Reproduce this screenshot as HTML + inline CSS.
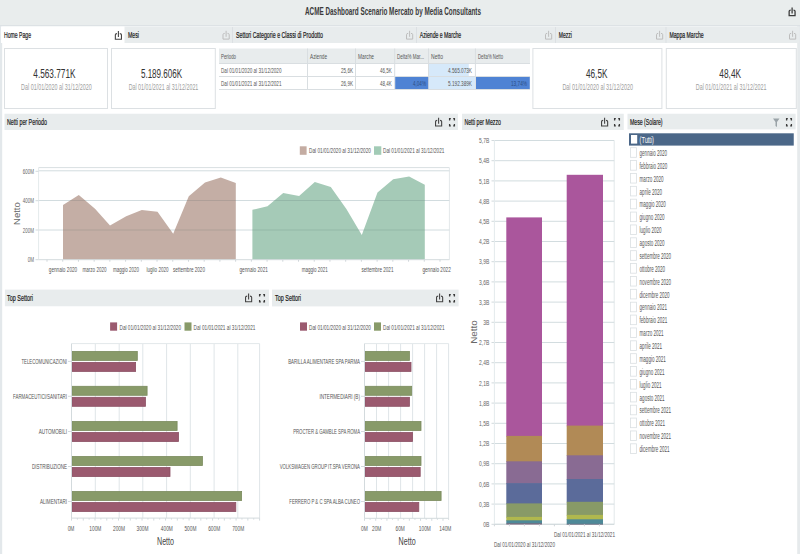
<!DOCTYPE html><html><head><meta charset="utf-8"><style>html,body{margin:0;padding:0;background:#e9eded;overflow:hidden}svg{display:block}text{font-family:"Liberation Sans", sans-serif}</style></head><body>
<svg width="800" height="554" viewBox="0 0 800 554">
<rect x="0" y="0" width="800" height="554" fill="#e9eded" />
<text x="305.0" y="15.0" font-size="10" fill="#3a3a3a" font-weight="bold" textLength="176.0" lengthAdjust="spacingAndGlyphs" >ACME Dashboard Scenario Mercato by Media Consultants</text>
<path d="M790.70 10.10 Q789.15 10.10 789.15 11.30 V15.65 H795.05 V11.30 Q795.05 10.10 793.50 10.10" fill="none" stroke="#3c3c3c" stroke-width="1.3"/>
<path d="M792.10 7.50 V13.50" fill="none" stroke="#3c3c3c" stroke-width="1.3"/>
<rect x="0" y="25" width="800" height="529" fill="#ffffff" />
<rect x="0" y="25" width="2.2" height="529" fill="#e3e8eb" />
<rect x="797.2" y="25" width="2.8" height="529" fill="#e6eaec" />
<line x1="0" y1="25.6" x2="800" y2="25.6" stroke="#dde2e5" stroke-width="1.2"/>
<rect x="1" y="26.5" width="798" height="16.5" fill="#e8eced" />
<rect x="1" y="26.5" width="123.5" height="16.5" fill="#ffffff" />
<line x1="232.5" y1="27" x2="232.5" y2="43" stroke="#dce0e3" stroke-width="1"/>
<line x1="416.5" y1="27" x2="416.5" y2="43" stroke="#dce0e3" stroke-width="1"/>
<line x1="555.5" y1="27" x2="555.5" y2="43" stroke="#dce0e3" stroke-width="1"/>
<line x1="666" y1="27" x2="666" y2="43" stroke="#dce0e3" stroke-width="1"/>
<text x="4.0" y="38.0" font-size="8.3" fill="#1a1a1a" font-weight="normal" textLength="27.0" lengthAdjust="spacingAndGlyphs"  stroke="#1a1a1a" stroke-width="0.2">Home Page</text>
<text x="128.0" y="37.5" font-size="8.3" fill="#1a1a1a" font-weight="normal" textLength="11.0" lengthAdjust="spacingAndGlyphs"  stroke="#1a1a1a" stroke-width="0.2">Mesi</text>
<text x="236.0" y="38.0" font-size="8.3" fill="#1a1a1a" font-weight="normal" textLength="87.0" lengthAdjust="spacingAndGlyphs"  stroke="#1a1a1a" stroke-width="0.2">Settori Categorie e Classi di Prodotto</text>
<text x="419.8" y="38.0" font-size="8.3" fill="#1a1a1a" font-weight="normal" textLength="41.4" lengthAdjust="spacingAndGlyphs"  stroke="#1a1a1a" stroke-width="0.2">Aziende e Marche</text>
<text x="558.8" y="37.5" font-size="8.3" fill="#1a1a1a" font-weight="normal" textLength="13.1" lengthAdjust="spacingAndGlyphs"  stroke="#1a1a1a" stroke-width="0.2">Mezzi</text>
<text x="669.4" y="38.0" font-size="8.3" fill="#1a1a1a" font-weight="normal" textLength="34.3" lengthAdjust="spacingAndGlyphs"  stroke="#1a1a1a" stroke-width="0.2">Mappa Marche</text>
<path d="M117.00 33.60 Q115.35 33.60 115.35 34.80 V39.25 H121.45 V34.80 Q121.45 33.60 119.80 33.60" fill="none" stroke="#444" stroke-width="1.1"/>
<path d="M118.40 31.00 V37.00" fill="none" stroke="#444" stroke-width="1.1"/>
<path d="M224.70 33.40 Q223.00 33.40 223.00 34.60 V39.10 H229.20 V34.60 Q229.20 33.40 227.50 33.40" fill="none" stroke="#bdbdbd" stroke-width="1"/>
<path d="M226.10 30.80 V36.80" fill="none" stroke="#bdbdbd" stroke-width="1"/>
<path d="M408.20 33.40 Q406.50 33.40 406.50 34.60 V39.10 H412.70 V34.60 Q412.70 33.40 411.00 33.40" fill="none" stroke="#bdbdbd" stroke-width="1"/>
<path d="M409.60 30.80 V36.80" fill="none" stroke="#bdbdbd" stroke-width="1"/>
<path d="M547.20 33.40 Q545.50 33.40 545.50 34.60 V39.10 H551.70 V34.60 Q551.70 33.40 550.00 33.40" fill="none" stroke="#bdbdbd" stroke-width="1"/>
<path d="M548.60 30.80 V36.80" fill="none" stroke="#bdbdbd" stroke-width="1"/>
<path d="M658.20 33.40 Q656.50 33.40 656.50 34.60 V39.10 H662.70 V34.60 Q662.70 33.40 661.00 33.40" fill="none" stroke="#bdbdbd" stroke-width="1"/>
<path d="M659.60 30.80 V36.80" fill="none" stroke="#bdbdbd" stroke-width="1"/>
<path d="M791.20 33.40 Q789.50 33.40 789.50 34.60 V39.10 H795.70 V34.60 Q795.70 33.40 794.00 33.40" fill="none" stroke="#bdbdbd" stroke-width="1"/>
<path d="M792.60 30.80 V36.80" fill="none" stroke="#bdbdbd" stroke-width="1"/>
<rect x="4.5" y="48.5" width="103" height="60" fill="#ffffff" stroke="#dce0e3" stroke-width="1" />
<text x="33.3" y="77.7" font-size="12.5" fill="#333" font-weight="normal" textLength="42.2" lengthAdjust="spacingAndGlyphs" >4.563.771K</text>
<text x="21.1" y="90.4" font-size="8.8" fill="#a0a0a0" font-weight="normal" textLength="70.6" lengthAdjust="spacingAndGlyphs" >Dal 01/01/2020 al 31/12/2020</text>
<rect x="111.5" y="48.5" width="103.80000000000001" height="60" fill="#ffffff" stroke="#dce0e3" stroke-width="1" />
<text x="140.9" y="77.7" font-size="12.5" fill="#333" font-weight="normal" textLength="41.3" lengthAdjust="spacingAndGlyphs" >5.189.606K</text>
<text x="128.7" y="90.4" font-size="8.8" fill="#a0a0a0" font-weight="normal" textLength="69.6" lengthAdjust="spacingAndGlyphs" >Dal 01/01/2021 al 31/12/2021</text>
<rect x="532.9" y="48.5" width="129.0" height="60" fill="#ffffff" stroke="#dce0e3" stroke-width="1" />
<text x="586.0" y="77.7" font-size="12.5" fill="#333" font-weight="normal" textLength="21.4" lengthAdjust="spacingAndGlyphs" >46,5K</text>
<text x="562.4" y="90.4" font-size="8.8" fill="#a0a0a0" font-weight="normal" textLength="70.6" lengthAdjust="spacingAndGlyphs" >Dal 01/01/2020 al 31/12/2020</text>
<rect x="666.3" y="48.5" width="130.0" height="60" fill="#ffffff" stroke="#dce0e3" stroke-width="1" />
<text x="719.3" y="77.7" font-size="12.5" fill="#333" font-weight="normal" textLength="21.8" lengthAdjust="spacingAndGlyphs" >48,4K</text>
<text x="695.8" y="90.4" font-size="8.8" fill="#a0a0a0" font-weight="normal" textLength="70.6" lengthAdjust="spacingAndGlyphs" >Dal 01/01/2021 al 31/12/2021</text>
<rect x="219" y="48.5" width="311" height="15" fill="#e8eced" />
<line x1="307.5" y1="48.5" x2="307.5" y2="89.5" stroke="#d9dee1" stroke-width="1"/>
<line x1="355.5" y1="48.5" x2="355.5" y2="89.5" stroke="#d9dee1" stroke-width="1"/>
<line x1="394.7" y1="48.5" x2="394.7" y2="89.5" stroke="#d9dee1" stroke-width="1"/>
<line x1="428.5" y1="48.5" x2="428.5" y2="89.5" stroke="#d9dee1" stroke-width="1"/>
<line x1="475.4" y1="48.5" x2="475.4" y2="89.5" stroke="#d9dee1" stroke-width="1"/>
<line x1="219" y1="63.5" x2="530" y2="63.5" stroke="#d9dee1" stroke-width="1"/>
<line x1="219" y1="76.5" x2="530" y2="76.5" stroke="#d9dee1" stroke-width="1"/>
<line x1="219" y1="89.5" x2="530" y2="89.5" stroke="#d9dee1" stroke-width="1"/>
<rect x="429" y="64" width="39.8" height="12" fill="#d6e9fa" />
<rect x="429" y="77" width="46" height="12" fill="#d6e9fa" />
<rect x="395.2" y="77" width="33" height="12" fill="#4f83d4" />
<rect x="476" y="77" width="53.8" height="12" fill="#4f83d4" />
<text x="221.0" y="58.5" font-size="8" fill="#555" font-weight="normal" textLength="15.0" lengthAdjust="spacingAndGlyphs" >Periodo</text>
<text x="310.0" y="58.5" font-size="8" fill="#555" font-weight="normal" textLength="17.0" lengthAdjust="spacingAndGlyphs" >Aziende</text>
<text x="358.0" y="58.5" font-size="8" fill="#555" font-weight="normal" textLength="16.0" lengthAdjust="spacingAndGlyphs" >Marche</text>
<text x="397.0" y="58.5" font-size="8" fill="#555" font-weight="normal" textLength="27.0" lengthAdjust="spacingAndGlyphs" >Delta% Mar...</text>
<text x="431.0" y="58.5" font-size="8" fill="#555" font-weight="normal" textLength="12.0" lengthAdjust="spacingAndGlyphs" >Netto</text>
<text x="478.0" y="58.5" font-size="8" fill="#555" font-weight="normal" textLength="25.0" lengthAdjust="spacingAndGlyphs" >Delta% Netto</text>
<text x="221.0" y="72.7" font-size="8" fill="#555" font-weight="normal" textLength="60.5" lengthAdjust="spacingAndGlyphs" >Dal 01/01/2020 al 31/12/2020</text>
<text x="221.0" y="85.7" font-size="8" fill="#555" font-weight="normal" textLength="60.5" lengthAdjust="spacingAndGlyphs" >Dal 01/01/2021 al 31/12/2021</text>
<text x="341.0" y="72.7" font-size="8" fill="#555" font-weight="normal" textLength="12.0" lengthAdjust="spacingAndGlyphs" >25,6K</text>
<text x="380.0" y="72.7" font-size="8" fill="#555" font-weight="normal" textLength="11.7" lengthAdjust="spacingAndGlyphs" >46,5K</text>
<text x="341.0" y="85.7" font-size="8" fill="#555" font-weight="normal" textLength="12.0" lengthAdjust="spacingAndGlyphs" >26,9K</text>
<text x="380.0" y="85.7" font-size="8" fill="#555" font-weight="normal" textLength="11.7" lengthAdjust="spacingAndGlyphs" >48,4K</text>
<text x="448.0" y="72.7" font-size="8" fill="#555" font-weight="normal" textLength="24.0" lengthAdjust="spacingAndGlyphs" >4.565.073K</text>
<text x="448.0" y="85.7" font-size="8" fill="#555" font-weight="normal" textLength="24.0" lengthAdjust="spacingAndGlyphs" >5.192.389K</text>
<text x="413.0" y="85.7" font-size="8" fill="#2d4f85" font-weight="normal" textLength="13.0" lengthAdjust="spacingAndGlyphs" >4,04%</text>
<text x="511.0" y="85.7" font-size="8" fill="#2d4f85" font-weight="normal" textLength="16.0" lengthAdjust="spacingAndGlyphs" >13,74%</text>
<rect x="4.5" y="113.75" width="453.5" height="16.25" fill="#e8eced" />
<text x="7.0" y="125.0" font-size="8.3" fill="#1a1a1a" font-weight="normal" textLength="40.0" lengthAdjust="spacingAndGlyphs"  stroke="#1a1a1a" stroke-width="0.2">Netti per Periodo</text>
<path d="M437.20 120.40 Q435.55 120.40 435.55 121.60 V126.05 H441.65 V121.60 Q441.65 120.40 440.00 120.40" fill="none" stroke="#444" stroke-width="1.1"/>
<path d="M438.60 117.80 V123.80" fill="none" stroke="#444" stroke-width="1.1"/>
<path d="M449.6 120.6 V118.6 H450.8 M453.2 118.6 H454.4 V120.6 M449.6 123.9 V125.9 H450.8 M453.2 125.9 H454.4 V123.9" fill="none" stroke="#3a3a3a" stroke-width="1.3"/>
<rect x="299.8" y="146.3" width="6.8" height="8.5" fill="#c4aca2" />
<text x="309.0" y="153.3" font-size="8" fill="#555" font-weight="normal" textLength="62.0" lengthAdjust="spacingAndGlyphs" >Dal 01/01/2020 al 31/12/2020</text>
<rect x="374" y="146.3" width="7.3" height="8.5" fill="#a2cbb6" />
<text x="383.0" y="153.3" font-size="8" fill="#555" font-weight="normal" textLength="61.4" lengthAdjust="spacingAndGlyphs" >Dal 01/01/2021 al 31/12/2021</text>
<rect x="38.6" y="167.6" width="410.79999999999995" height="92.1" fill="#ffffff" />
<line x1="38.6" y1="167.6" x2="449.4" y2="167.6" stroke="#d9dfe2" stroke-width="1"/>
<line x1="449.4" y1="167.6" x2="449.4" y2="259.7" stroke="#e3e8ea" stroke-width="1"/>
<line x1="38.6" y1="170.8" x2="449.4" y2="170.8" stroke="#d2dcdf" stroke-width="1"/>
<line x1="38.6" y1="200.5" x2="449.4" y2="200.5" stroke="#d2dcdf" stroke-width="1"/>
<line x1="38.6" y1="230.0" x2="449.4" y2="230.0" stroke="#d2dcdf" stroke-width="1"/>
<path d="M63.0 259.7 L63.0 205.0 L78.8 195.0 L95.0 208.8 L110.0 225.5 L126.2 216.2 L141.8 210.0 L157.5 211.8 L173.2 233.8 L188.8 196.2 L205.0 182.5 L220.8 177.5 L235.8 183.0 L235.8 259.7 Z" fill="#c4aea5"/>
<path d="M252.4 259.7 L252.4 209.8 L267.5 206.2 L283.2 193.0 L299.1 196.1 L314.8 182.0 L330.8 187.0 L346.4 209.0 L361.8 235.1 L377.5 192.5 L393.2 179.3 L409.1 176.6 L424.8 184.8 L424.8 259.7 Z" fill="#a5cab7"/>
<clipPath id="ac"><path d="M63.0 259.7 L63.0 205.0 L78.8 195.0 L95.0 208.8 L110.0 225.5 L126.2 216.2 L141.8 210.0 L157.5 211.8 L173.2 233.8 L188.8 196.2 L205.0 182.5 L220.8 177.5 L235.8 183.0 L235.8 259.7 Z M252.4 259.7 L252.4 209.8 L267.5 206.2 L283.2 193.0 L299.1 196.1 L314.8 182.0 L330.8 187.0 L346.4 209.0 L361.8 235.1 L377.5 192.5 L393.2 179.3 L409.1 176.6 L424.8 184.8 L424.8 259.7 Z"/></clipPath>
<g clip-path="url(#ac)">
<line x1="38.6" y1="200.5" x2="449.4" y2="200.5" stroke="rgba(40,60,70,0.13)" stroke-width="1.1"/>
<line x1="38.6" y1="230.0" x2="449.4" y2="230.0" stroke="rgba(40,60,70,0.13)" stroke-width="1.1"/>
</g>
<line x1="38.6" y1="259.7" x2="449.4" y2="259.7" stroke="#d3dadd" stroke-width="1"/>
<line x1="38.6" y1="167.6" x2="38.6" y2="259.7" stroke="#e4eaec" stroke-width="1"/>
<text x="22.8" y="174.0" font-size="7.3" fill="#666" font-weight="normal" textLength="11.2" lengthAdjust="spacingAndGlyphs" >600M</text>
<line x1="35.5" y1="171.3" x2="38.6" y2="171.3" stroke="#d3dadd" stroke-width="1"/>
<text x="22.8" y="203.4" font-size="7.3" fill="#666" font-weight="normal" textLength="11.2" lengthAdjust="spacingAndGlyphs" >400M</text>
<line x1="35.5" y1="200.7" x2="38.6" y2="200.7" stroke="#d3dadd" stroke-width="1"/>
<text x="22.8" y="232.7" font-size="7.3" fill="#666" font-weight="normal" textLength="11.2" lengthAdjust="spacingAndGlyphs" >200M</text>
<line x1="35.5" y1="230" x2="38.6" y2="230" stroke="#d3dadd" stroke-width="1"/>
<text x="27.7" y="262.4" font-size="7.3" fill="#666" font-weight="normal" textLength="6.3" lengthAdjust="spacingAndGlyphs" >0M</text>
<line x1="35.5" y1="259.7" x2="38.6" y2="259.7" stroke="#d3dadd" stroke-width="1"/>
<line x1="47.0" y1="259.7" x2="47.0" y2="261.7" stroke="#d0d6da" stroke-width="1"/>
<line x1="62.72" y1="259.7" x2="62.72" y2="261.7" stroke="#d0d6da" stroke-width="1"/>
<line x1="78.44" y1="259.7" x2="78.44" y2="261.7" stroke="#d0d6da" stroke-width="1"/>
<line x1="94.16" y1="259.7" x2="94.16" y2="261.7" stroke="#d0d6da" stroke-width="1"/>
<line x1="109.88" y1="259.7" x2="109.88" y2="261.7" stroke="#d0d6da" stroke-width="1"/>
<line x1="125.60000000000001" y1="259.7" x2="125.60000000000001" y2="261.7" stroke="#d0d6da" stroke-width="1"/>
<line x1="141.32" y1="259.7" x2="141.32" y2="261.7" stroke="#d0d6da" stroke-width="1"/>
<line x1="157.04000000000002" y1="259.7" x2="157.04000000000002" y2="261.7" stroke="#d0d6da" stroke-width="1"/>
<line x1="172.76" y1="259.7" x2="172.76" y2="261.7" stroke="#d0d6da" stroke-width="1"/>
<line x1="188.48000000000002" y1="259.7" x2="188.48000000000002" y2="261.7" stroke="#d0d6da" stroke-width="1"/>
<line x1="204.20000000000002" y1="259.7" x2="204.20000000000002" y2="261.7" stroke="#d0d6da" stroke-width="1"/>
<line x1="219.92000000000002" y1="259.7" x2="219.92000000000002" y2="261.7" stroke="#d0d6da" stroke-width="1"/>
<line x1="235.64000000000001" y1="259.7" x2="235.64000000000001" y2="261.7" stroke="#d0d6da" stroke-width="1"/>
<line x1="251.36" y1="259.7" x2="251.36" y2="261.7" stroke="#d0d6da" stroke-width="1"/>
<line x1="267.08000000000004" y1="259.7" x2="267.08000000000004" y2="261.7" stroke="#d0d6da" stroke-width="1"/>
<line x1="282.8" y1="259.7" x2="282.8" y2="261.7" stroke="#d0d6da" stroke-width="1"/>
<line x1="298.52" y1="259.7" x2="298.52" y2="261.7" stroke="#d0d6da" stroke-width="1"/>
<line x1="314.24" y1="259.7" x2="314.24" y2="261.7" stroke="#d0d6da" stroke-width="1"/>
<line x1="329.96000000000004" y1="259.7" x2="329.96000000000004" y2="261.7" stroke="#d0d6da" stroke-width="1"/>
<line x1="345.68" y1="259.7" x2="345.68" y2="261.7" stroke="#d0d6da" stroke-width="1"/>
<line x1="361.40000000000003" y1="259.7" x2="361.40000000000003" y2="261.7" stroke="#d0d6da" stroke-width="1"/>
<line x1="377.12" y1="259.7" x2="377.12" y2="261.7" stroke="#d0d6da" stroke-width="1"/>
<line x1="392.84000000000003" y1="259.7" x2="392.84000000000003" y2="261.7" stroke="#d0d6da" stroke-width="1"/>
<line x1="408.56" y1="259.7" x2="408.56" y2="261.7" stroke="#d0d6da" stroke-width="1"/>
<line x1="424.28000000000003" y1="259.7" x2="424.28000000000003" y2="261.7" stroke="#d0d6da" stroke-width="1"/>
<line x1="440.0" y1="259.7" x2="440.0" y2="261.7" stroke="#d0d6da" stroke-width="1"/>
<text x="0" y="0" font-size="9" fill="#686868" textLength="22.8" lengthAdjust="spacingAndGlyphs" transform="translate(20.3,213.6) rotate(-90)" text-anchor="middle">Netto</text>
<text x="48.8" y="272.3" font-size="7.6" fill="#555" font-weight="normal" textLength="28.4" lengthAdjust="spacingAndGlyphs" >gennaio 2020</text>
<text x="82.5" y="272.3" font-size="7.6" fill="#555" font-weight="normal" textLength="24.0" lengthAdjust="spacingAndGlyphs" >marzo 2020</text>
<text x="113.0" y="272.3" font-size="7.6" fill="#555" font-weight="normal" textLength="26.0" lengthAdjust="spacingAndGlyphs" >maggio 2020</text>
<text x="146.5" y="272.3" font-size="7.6" fill="#555" font-weight="normal" textLength="22.0" lengthAdjust="spacingAndGlyphs" >luglio 2020</text>
<text x="173.0" y="272.3" font-size="7.6" fill="#555" font-weight="normal" textLength="32.0" lengthAdjust="spacingAndGlyphs" >settembre 2020</text>
<text x="239.5" y="272.3" font-size="7.6" fill="#555" font-weight="normal" textLength="28.4" lengthAdjust="spacingAndGlyphs" >gennaio 2021</text>
<text x="301.8" y="272.3" font-size="7.6" fill="#555" font-weight="normal" textLength="26.0" lengthAdjust="spacingAndGlyphs" >maggio 2021</text>
<text x="361.5" y="272.3" font-size="7.6" fill="#555" font-weight="normal" textLength="32.0" lengthAdjust="spacingAndGlyphs" >settembre 2021</text>
<text x="422.4" y="272.3" font-size="7.6" fill="#555" font-weight="normal" textLength="28.4" lengthAdjust="spacingAndGlyphs" >gennaio 2022</text>
<rect x="462" y="113.75" width="161.75" height="16.25" fill="#e8eced" />
<text x="464.4" y="125.0" font-size="8.3" fill="#1a1a1a" font-weight="normal" textLength="36.5" lengthAdjust="spacingAndGlyphs"  stroke="#1a1a1a" stroke-width="0.2">Netti per Mezzo</text>
<path d="M603.20 120.40 Q601.55 120.40 601.55 121.60 V126.05 H607.65 V121.60 Q607.65 120.40 606.00 120.40" fill="none" stroke="#444" stroke-width="1.1"/>
<path d="M604.60 117.80 V123.80" fill="none" stroke="#444" stroke-width="1.1"/>
<path d="M614.6 120.6 V118.6 H615.8 M618.2 118.6 H619.4 V120.6 M614.6 123.9 V125.9 H615.8 M618.2 125.9 H619.4 V123.9" fill="none" stroke="#3a3a3a" stroke-width="1.3"/>
<line x1="614.2" y1="140.5" x2="614.2" y2="524.3" stroke="#e3e8ea" stroke-width="1"/>
<line x1="494.4" y1="140.5" x2="614.2" y2="140.5" stroke="#d2dcdf" stroke-width="1"/>
<line x1="491.5" y1="140.5" x2="494.4" y2="140.5" stroke="#d3dadd" stroke-width="1"/>
<text x="479.1" y="143.1" font-size="7.6" fill="#666" font-weight="normal" textLength="10.2" lengthAdjust="spacingAndGlyphs" >5,7B</text>
<line x1="494.4" y1="160.7" x2="614.2" y2="160.7" stroke="#d2dcdf" stroke-width="1"/>
<line x1="491.5" y1="160.7" x2="494.4" y2="160.7" stroke="#d3dadd" stroke-width="1"/>
<text x="479.1" y="163.3" font-size="7.6" fill="#666" font-weight="normal" textLength="10.2" lengthAdjust="spacingAndGlyphs" >5,4B</text>
<line x1="494.4" y1="180.9" x2="614.2" y2="180.9" stroke="#d2dcdf" stroke-width="1"/>
<line x1="491.5" y1="180.9" x2="494.4" y2="180.9" stroke="#d3dadd" stroke-width="1"/>
<text x="479.1" y="183.5" font-size="7.6" fill="#666" font-weight="normal" textLength="10.2" lengthAdjust="spacingAndGlyphs" >5,1B</text>
<line x1="494.4" y1="201.1" x2="614.2" y2="201.1" stroke="#d2dcdf" stroke-width="1"/>
<line x1="491.5" y1="201.1" x2="494.4" y2="201.1" stroke="#d3dadd" stroke-width="1"/>
<text x="479.1" y="203.7" font-size="7.6" fill="#666" font-weight="normal" textLength="10.2" lengthAdjust="spacingAndGlyphs" >4,8B</text>
<line x1="494.4" y1="221.3" x2="614.2" y2="221.3" stroke="#d2dcdf" stroke-width="1"/>
<line x1="491.5" y1="221.3" x2="494.4" y2="221.3" stroke="#d3dadd" stroke-width="1"/>
<text x="479.1" y="223.9" font-size="7.6" fill="#666" font-weight="normal" textLength="10.2" lengthAdjust="spacingAndGlyphs" >4,5B</text>
<line x1="494.4" y1="241.5" x2="614.2" y2="241.5" stroke="#d2dcdf" stroke-width="1"/>
<line x1="491.5" y1="241.5" x2="494.4" y2="241.5" stroke="#d3dadd" stroke-width="1"/>
<text x="479.1" y="244.1" font-size="7.6" fill="#666" font-weight="normal" textLength="10.2" lengthAdjust="spacingAndGlyphs" >4,2B</text>
<line x1="494.4" y1="261.7" x2="614.2" y2="261.7" stroke="#d2dcdf" stroke-width="1"/>
<line x1="491.5" y1="261.7" x2="494.4" y2="261.7" stroke="#d3dadd" stroke-width="1"/>
<text x="479.1" y="264.3" font-size="7.6" fill="#666" font-weight="normal" textLength="10.2" lengthAdjust="spacingAndGlyphs" >3,9B</text>
<line x1="494.4" y1="281.9" x2="614.2" y2="281.9" stroke="#d2dcdf" stroke-width="1"/>
<line x1="491.5" y1="281.9" x2="494.4" y2="281.9" stroke="#d3dadd" stroke-width="1"/>
<text x="479.1" y="284.5" font-size="7.6" fill="#666" font-weight="normal" textLength="10.2" lengthAdjust="spacingAndGlyphs" >3,6B</text>
<line x1="494.4" y1="302.1" x2="614.2" y2="302.1" stroke="#d2dcdf" stroke-width="1"/>
<line x1="491.5" y1="302.1" x2="494.4" y2="302.1" stroke="#d3dadd" stroke-width="1"/>
<text x="479.1" y="304.7" font-size="7.6" fill="#666" font-weight="normal" textLength="10.2" lengthAdjust="spacingAndGlyphs" >3,3B</text>
<line x1="494.4" y1="322.29999999999995" x2="614.2" y2="322.29999999999995" stroke="#d2dcdf" stroke-width="1"/>
<line x1="491.5" y1="322.29999999999995" x2="494.4" y2="322.29999999999995" stroke="#d3dadd" stroke-width="1"/>
<text x="483.2" y="324.9" font-size="7.6" fill="#666" font-weight="normal" textLength="6.1" lengthAdjust="spacingAndGlyphs" >3B</text>
<line x1="494.4" y1="342.5" x2="614.2" y2="342.5" stroke="#d2dcdf" stroke-width="1"/>
<line x1="491.5" y1="342.5" x2="494.4" y2="342.5" stroke="#d3dadd" stroke-width="1"/>
<text x="479.1" y="345.1" font-size="7.6" fill="#666" font-weight="normal" textLength="10.2" lengthAdjust="spacingAndGlyphs" >2,7B</text>
<line x1="494.4" y1="362.7" x2="614.2" y2="362.7" stroke="#d2dcdf" stroke-width="1"/>
<line x1="491.5" y1="362.7" x2="494.4" y2="362.7" stroke="#d3dadd" stroke-width="1"/>
<text x="479.1" y="365.3" font-size="7.6" fill="#666" font-weight="normal" textLength="10.2" lengthAdjust="spacingAndGlyphs" >2,4B</text>
<line x1="494.4" y1="382.9" x2="614.2" y2="382.9" stroke="#d2dcdf" stroke-width="1"/>
<line x1="491.5" y1="382.9" x2="494.4" y2="382.9" stroke="#d3dadd" stroke-width="1"/>
<text x="479.1" y="385.5" font-size="7.6" fill="#666" font-weight="normal" textLength="10.2" lengthAdjust="spacingAndGlyphs" >2,1B</text>
<line x1="494.4" y1="403.09999999999997" x2="614.2" y2="403.09999999999997" stroke="#d2dcdf" stroke-width="1"/>
<line x1="491.5" y1="403.09999999999997" x2="494.4" y2="403.09999999999997" stroke="#d3dadd" stroke-width="1"/>
<text x="479.1" y="405.7" font-size="7.6" fill="#666" font-weight="normal" textLength="10.2" lengthAdjust="spacingAndGlyphs" >1,8B</text>
<line x1="494.4" y1="423.3" x2="614.2" y2="423.3" stroke="#d2dcdf" stroke-width="1"/>
<line x1="491.5" y1="423.3" x2="494.4" y2="423.3" stroke="#d3dadd" stroke-width="1"/>
<text x="479.1" y="425.9" font-size="7.6" fill="#666" font-weight="normal" textLength="10.2" lengthAdjust="spacingAndGlyphs" >1,5B</text>
<line x1="494.4" y1="443.5" x2="614.2" y2="443.5" stroke="#d2dcdf" stroke-width="1"/>
<line x1="491.5" y1="443.5" x2="494.4" y2="443.5" stroke="#d3dadd" stroke-width="1"/>
<text x="479.1" y="446.1" font-size="7.6" fill="#666" font-weight="normal" textLength="10.2" lengthAdjust="spacingAndGlyphs" >1,2B</text>
<line x1="494.4" y1="463.7" x2="614.2" y2="463.7" stroke="#d2dcdf" stroke-width="1"/>
<line x1="491.5" y1="463.7" x2="494.4" y2="463.7" stroke="#d3dadd" stroke-width="1"/>
<text x="479.1" y="466.3" font-size="7.6" fill="#666" font-weight="normal" textLength="10.2" lengthAdjust="spacingAndGlyphs" >0,9B</text>
<line x1="494.4" y1="483.9" x2="614.2" y2="483.9" stroke="#d2dcdf" stroke-width="1"/>
<line x1="491.5" y1="483.9" x2="494.4" y2="483.9" stroke="#d3dadd" stroke-width="1"/>
<text x="479.1" y="486.5" font-size="7.6" fill="#666" font-weight="normal" textLength="10.2" lengthAdjust="spacingAndGlyphs" >0,6B</text>
<line x1="494.4" y1="504.09999999999997" x2="614.2" y2="504.09999999999997" stroke="#d2dcdf" stroke-width="1"/>
<line x1="491.5" y1="504.09999999999997" x2="494.4" y2="504.09999999999997" stroke="#d3dadd" stroke-width="1"/>
<text x="479.1" y="506.7" font-size="7.6" fill="#666" font-weight="normal" textLength="10.2" lengthAdjust="spacingAndGlyphs" >0,3B</text>
<line x1="494.4" y1="524.3" x2="614.2" y2="524.3" stroke="#d2dcdf" stroke-width="1"/>
<line x1="491.5" y1="524.3" x2="494.4" y2="524.3" stroke="#d3dadd" stroke-width="1"/>
<text x="483.2" y="526.9" font-size="7.6" fill="#666" font-weight="normal" textLength="6.1" lengthAdjust="spacingAndGlyphs" >0B</text>
<line x1="494.4" y1="140.5" x2="494.4" y2="524.3" stroke="#e4eaec" stroke-width="1"/>
<line x1="494.4" y1="524.3" x2="614.2" y2="524.3" stroke="#d3dadd" stroke-width="1"/>
<rect x="506.3" y="217.4" width="35.69999999999999" height="219.19999999999996" fill="#aa569c" />
<rect x="506.3" y="435.9" width="35.69999999999999" height="26.100000000000033" fill="#b18a56" />
<rect x="506.3" y="461.3" width="35.69999999999999" height="22.50000000000001" fill="#896b93" />
<rect x="506.3" y="483.1" width="35.69999999999999" height="20.999999999999954" fill="#5b6b9a" />
<rect x="506.3" y="503.4" width="35.69999999999999" height="14.2" fill="#889a67" />
<rect x="506.3" y="516.9" width="35.69999999999999" height="4.099999999999977" fill="#b0b84e" />
<rect x="506.3" y="520.3" width="35.69999999999999" height="4.000000000000068" fill="#4e8998" />
<rect x="506.3" y="523.6" width="35.69999999999999" height="0.6999999999999318" fill="#a0526a" />
<rect x="566.7" y="174.8" width="36.299999999999955" height="251.5" fill="#aa569c" />
<rect x="566.7" y="425.6" width="36.299999999999955" height="30.399999999999988" fill="#b18a56" />
<rect x="566.7" y="455.3" width="36.299999999999955" height="24.399999999999988" fill="#896b93" />
<rect x="566.7" y="479.0" width="36.299999999999955" height="23.50000000000001" fill="#5b6b9a" />
<rect x="566.7" y="501.8" width="36.299999999999955" height="13.799999999999965" fill="#889a67" />
<rect x="566.7" y="514.9" width="36.299999999999955" height="5.099999999999977" fill="#b0b84e" />
<rect x="566.7" y="519.3" width="36.299999999999955" height="5.300000000000023" fill="#4e8998" />
<rect x="566.7" y="523.9" width="36.299999999999955" height="0.39999999999997726" fill="#a0526a" />
<line x1="494.4" y1="524.3" x2="494.4" y2="526.3" stroke="#d0d6da" stroke-width="1"/>
<line x1="509.4" y1="524.3" x2="509.4" y2="526.3" stroke="#d0d6da" stroke-width="1"/>
<line x1="524.4" y1="524.3" x2="524.4" y2="526.3" stroke="#d0d6da" stroke-width="1"/>
<line x1="539.4" y1="524.3" x2="539.4" y2="526.3" stroke="#d0d6da" stroke-width="1"/>
<line x1="554.4" y1="524.3" x2="554.4" y2="526.3" stroke="#d0d6da" stroke-width="1"/>
<line x1="569.4" y1="524.3" x2="569.4" y2="526.3" stroke="#d0d6da" stroke-width="1"/>
<line x1="584.4" y1="524.3" x2="584.4" y2="526.3" stroke="#d0d6da" stroke-width="1"/>
<line x1="599.4" y1="524.3" x2="599.4" y2="526.3" stroke="#d0d6da" stroke-width="1"/>
<text x="0" y="0" font-size="9" fill="#686868" textLength="23.7" lengthAdjust="spacingAndGlyphs" transform="translate(476.8,332) rotate(-90)" text-anchor="middle">Netto</text>
<text x="554.0" y="537.0" font-size="7.6" fill="#555" font-weight="normal" textLength="61.0" lengthAdjust="spacingAndGlyphs" >Dal 01/01/2021 al 31/12/2021</text>
<text x="494.0" y="546.5" font-size="7.6" fill="#555" font-weight="normal" textLength="61.0" lengthAdjust="spacingAndGlyphs" >Dal 01/01/2020 al 31/12/2020</text>
<rect x="627.5" y="113.75" width="168.10000000000002" height="15.650000000000006" fill="#e8eced" />
<text x="630.0" y="125.0" font-size="8.3" fill="#1a1a1a" font-weight="normal" textLength="32.5" lengthAdjust="spacingAndGlyphs"  stroke="#1a1a1a" stroke-width="0.2">Mese (Solare)</text>
<path d="M773 118.5 H779.5 L777 122 V127 L775.5 126 V122 Z" fill="#9aa3a8"/>
<path d="M786.6 120.6 V118.6 H787.8 M790.2 118.6 H791.4 V120.6 M786.6 123.9 V125.9 H787.8 M790.2 125.9 H791.4 V123.9" fill="none" stroke="#3a3a3a" stroke-width="1.3"/>
<rect x="629" y="133.3" width="164.75" height="12.3" fill="#4b6788" />
<rect x="631" y="135" width="6.2" height="8.6" fill="#ffffff" />
<text x="639.6" y="143.2" font-size="8.5" fill="#ffffff" font-weight="normal" textLength="14.4" lengthAdjust="spacingAndGlyphs" >(Tutti)</text>
<rect x="630.4" y="147.7" width="6.1" height="9.6" fill="#ffffff" stroke="#dadfe2" stroke-width="0.8" />
<text x="639.6" y="155.9" font-size="8.5" fill="#555" font-weight="normal" textLength="27.4" lengthAdjust="spacingAndGlyphs" >gennaio 2020</text>
<rect x="630.4" y="160.575" width="6.1" height="9.6" fill="#ffffff" stroke="#dadfe2" stroke-width="0.8" />
<text x="639.6" y="168.8" font-size="8.5" fill="#555" font-weight="normal" textLength="27.7" lengthAdjust="spacingAndGlyphs" >febbraio 2020</text>
<rect x="630.4" y="173.45" width="6.1" height="9.6" fill="#ffffff" stroke="#dadfe2" stroke-width="0.8" />
<text x="639.6" y="181.7" font-size="8.5" fill="#555" font-weight="normal" textLength="23.9" lengthAdjust="spacingAndGlyphs" >marzo 2020</text>
<rect x="630.4" y="186.325" width="6.1" height="9.6" fill="#ffffff" stroke="#dadfe2" stroke-width="0.8" />
<text x="639.6" y="194.5" font-size="8.5" fill="#555" font-weight="normal" textLength="22.4" lengthAdjust="spacingAndGlyphs" >aprile 2020</text>
<rect x="630.4" y="199.2" width="6.1" height="9.6" fill="#ffffff" stroke="#dadfe2" stroke-width="0.8" />
<text x="639.6" y="207.4" font-size="8.5" fill="#555" font-weight="normal" textLength="26.1" lengthAdjust="spacingAndGlyphs" >maggio 2020</text>
<rect x="630.4" y="212.075" width="6.1" height="9.6" fill="#ffffff" stroke="#dadfe2" stroke-width="0.8" />
<text x="639.6" y="220.3" font-size="8.5" fill="#555" font-weight="normal" textLength="24.9" lengthAdjust="spacingAndGlyphs" >giugno 2020</text>
<rect x="630.4" y="224.95" width="6.1" height="9.6" fill="#ffffff" stroke="#dadfe2" stroke-width="0.8" />
<text x="639.6" y="233.2" font-size="8.5" fill="#555" font-weight="normal" textLength="21.9" lengthAdjust="spacingAndGlyphs" >luglio 2020</text>
<rect x="630.4" y="237.825" width="6.1" height="9.6" fill="#ffffff" stroke="#dadfe2" stroke-width="0.8" />
<text x="639.6" y="246.0" font-size="8.5" fill="#555" font-weight="normal" textLength="24.9" lengthAdjust="spacingAndGlyphs" >agosto 2020</text>
<rect x="630.4" y="250.7" width="6.1" height="9.6" fill="#ffffff" stroke="#dadfe2" stroke-width="0.8" />
<text x="639.6" y="258.9" font-size="8.5" fill="#555" font-weight="normal" textLength="31.4" lengthAdjust="spacingAndGlyphs" >settembre 2020</text>
<rect x="630.4" y="263.575" width="6.1" height="9.6" fill="#ffffff" stroke="#dadfe2" stroke-width="0.8" />
<text x="639.6" y="271.8" font-size="8.5" fill="#555" font-weight="normal" textLength="25.4" lengthAdjust="spacingAndGlyphs" >ottobre 2020</text>
<rect x="630.4" y="276.45" width="6.1" height="9.6" fill="#ffffff" stroke="#dadfe2" stroke-width="0.8" />
<text x="639.6" y="284.6" font-size="8.5" fill="#555" font-weight="normal" textLength="31.4" lengthAdjust="spacingAndGlyphs" >novembre 2020</text>
<rect x="630.4" y="289.325" width="6.1" height="9.6" fill="#ffffff" stroke="#dadfe2" stroke-width="0.8" />
<text x="639.6" y="297.5" font-size="8.5" fill="#555" font-weight="normal" textLength="29.9" lengthAdjust="spacingAndGlyphs" >dicembre 2020</text>
<rect x="630.4" y="302.2" width="6.1" height="9.6" fill="#ffffff" stroke="#dadfe2" stroke-width="0.8" />
<text x="639.6" y="310.4" font-size="8.5" fill="#555" font-weight="normal" textLength="27.4" lengthAdjust="spacingAndGlyphs" >gennaio 2021</text>
<rect x="630.4" y="315.075" width="6.1" height="9.6" fill="#ffffff" stroke="#dadfe2" stroke-width="0.8" />
<text x="639.6" y="323.3" font-size="8.5" fill="#555" font-weight="normal" textLength="27.7" lengthAdjust="spacingAndGlyphs" >febbraio 2021</text>
<rect x="630.4" y="327.95" width="6.1" height="9.6" fill="#ffffff" stroke="#dadfe2" stroke-width="0.8" />
<text x="639.6" y="336.1" font-size="8.5" fill="#555" font-weight="normal" textLength="23.9" lengthAdjust="spacingAndGlyphs" >marzo 2021</text>
<rect x="630.4" y="340.825" width="6.1" height="9.6" fill="#ffffff" stroke="#dadfe2" stroke-width="0.8" />
<text x="639.6" y="349.0" font-size="8.5" fill="#555" font-weight="normal" textLength="22.4" lengthAdjust="spacingAndGlyphs" >aprile 2021</text>
<rect x="630.4" y="353.7" width="6.1" height="9.6" fill="#ffffff" stroke="#dadfe2" stroke-width="0.8" />
<text x="639.6" y="361.9" font-size="8.5" fill="#555" font-weight="normal" textLength="26.1" lengthAdjust="spacingAndGlyphs" >maggio 2021</text>
<rect x="630.4" y="366.575" width="6.1" height="9.6" fill="#ffffff" stroke="#dadfe2" stroke-width="0.8" />
<text x="639.6" y="374.8" font-size="8.5" fill="#555" font-weight="normal" textLength="24.9" lengthAdjust="spacingAndGlyphs" >giugno 2021</text>
<rect x="630.4" y="379.45" width="6.1" height="9.6" fill="#ffffff" stroke="#dadfe2" stroke-width="0.8" />
<text x="639.6" y="387.6" font-size="8.5" fill="#555" font-weight="normal" textLength="21.9" lengthAdjust="spacingAndGlyphs" >luglio 2021</text>
<rect x="630.4" y="392.325" width="6.1" height="9.6" fill="#ffffff" stroke="#dadfe2" stroke-width="0.8" />
<text x="639.6" y="400.5" font-size="8.5" fill="#555" font-weight="normal" textLength="24.9" lengthAdjust="spacingAndGlyphs" >agosto 2021</text>
<rect x="630.4" y="405.2" width="6.1" height="9.6" fill="#ffffff" stroke="#dadfe2" stroke-width="0.8" />
<text x="639.6" y="413.4" font-size="8.5" fill="#555" font-weight="normal" textLength="31.4" lengthAdjust="spacingAndGlyphs" >settembre 2021</text>
<rect x="630.4" y="418.075" width="6.1" height="9.6" fill="#ffffff" stroke="#dadfe2" stroke-width="0.8" />
<text x="639.6" y="426.3" font-size="8.5" fill="#555" font-weight="normal" textLength="25.4" lengthAdjust="spacingAndGlyphs" >ottobre 2021</text>
<rect x="630.4" y="430.95" width="6.1" height="9.6" fill="#ffffff" stroke="#dadfe2" stroke-width="0.8" />
<text x="639.6" y="439.1" font-size="8.5" fill="#555" font-weight="normal" textLength="31.4" lengthAdjust="spacingAndGlyphs" >novembre 2021</text>
<rect x="630.4" y="443.825" width="6.1" height="9.6" fill="#ffffff" stroke="#dadfe2" stroke-width="0.8" />
<text x="639.6" y="452.0" font-size="8.5" fill="#555" font-weight="normal" textLength="29.9" lengthAdjust="spacingAndGlyphs" >dicembre 2021</text>
<rect x="4.9" y="289.6" width="264.1" height="16.649999999999977" fill="#e8eced" />
<text x="7.1" y="300.8" font-size="8.3" fill="#1a1a1a" font-weight="normal" textLength="25.9" lengthAdjust="spacingAndGlyphs"  stroke="#1a1a1a" stroke-width="0.2">Top Settori</text>
<path d="M247.20 296.10 Q245.55 296.10 245.55 297.30 V301.75 H251.65 V297.30 Q251.65 296.10 250.00 296.10" fill="none" stroke="#444" stroke-width="1.1"/>
<path d="M248.60 293.50 V299.50" fill="none" stroke="#444" stroke-width="1.1"/>
<path d="M259.6 296.6 V294.6 H260.8 M263.2 294.6 H264.4 V296.6 M259.6 299.9 V301.9 H260.8 M263.2 301.9 H264.4 V299.9" fill="none" stroke="#3a3a3a" stroke-width="1.3"/>
<rect x="272" y="289.6" width="186.60000000000002" height="16.799999999999955" fill="#e8eced" />
<text x="275.0" y="300.8" font-size="8.3" fill="#1a1a1a" font-weight="normal" textLength="26.0" lengthAdjust="spacingAndGlyphs"  stroke="#1a1a1a" stroke-width="0.2">Top Settori</text>
<path d="M438.20 296.10 Q436.55 296.10 436.55 297.30 V301.75 H442.65 V297.30 Q442.65 296.10 441.00 296.10" fill="none" stroke="#444" stroke-width="1.1"/>
<path d="M439.60 293.50 V299.50" fill="none" stroke="#444" stroke-width="1.1"/>
<path d="M449.6 296.6 V294.6 H450.8 M453.2 294.6 H454.4 V296.6 M449.6 299.9 V301.9 H450.8 M453.2 301.9 H454.4 V299.9" fill="none" stroke="#3a3a3a" stroke-width="1.3"/>
<rect x="110.1" y="322.4" width="7" height="8.3" fill="#9b5a6f" />
<text x="119.5" y="329.5" font-size="8" fill="#555" font-weight="normal" textLength="61.5" lengthAdjust="spacingAndGlyphs" >Dal 01/01/2020 al 31/12/2020</text>
<rect x="184.5" y="322.4" width="7" height="8.3" fill="#889a69" />
<text x="193.5" y="329.5" font-size="8" fill="#555" font-weight="normal" textLength="61.9" lengthAdjust="spacingAndGlyphs" >Dal 01/01/2021 al 31/12/2021</text>
<rect x="300" y="322.4" width="7" height="8.3" fill="#9b5a6f" />
<text x="309.0" y="329.5" font-size="8" fill="#555" font-weight="normal" textLength="62.0" lengthAdjust="spacingAndGlyphs" >Dal 01/01/2020 al 31/12/2020</text>
<rect x="374" y="322.4" width="7" height="8.3" fill="#889a69" />
<text x="383.0" y="329.5" font-size="8" fill="#555" font-weight="normal" textLength="61.5" lengthAdjust="spacingAndGlyphs" >Dal 01/01/2021 al 31/12/2021</text>
<rect x="71.5" y="343.6" width="188.10000000000002" height="174.5" fill="#ffffff" />
<line x1="95.3" y1="343.6" x2="95.3" y2="518.1" stroke="#dfe5e8" stroke-width="1"/>
<line x1="119.2" y1="343.6" x2="119.2" y2="518.1" stroke="#dfe5e8" stroke-width="1"/>
<line x1="142.8" y1="343.6" x2="142.8" y2="518.1" stroke="#dfe5e8" stroke-width="1"/>
<line x1="166.6" y1="343.6" x2="166.6" y2="518.1" stroke="#dfe5e8" stroke-width="1"/>
<line x1="190.3" y1="343.6" x2="190.3" y2="518.1" stroke="#dfe5e8" stroke-width="1"/>
<line x1="214.1" y1="343.6" x2="214.1" y2="518.1" stroke="#dfe5e8" stroke-width="1"/>
<line x1="237.8" y1="343.6" x2="237.8" y2="518.1" stroke="#dfe5e8" stroke-width="1"/>
<line x1="71.5" y1="343.6" x2="259.6" y2="343.6" stroke="#e3e8ea" stroke-width="1"/>
<line x1="259.6" y1="343.6" x2="259.6" y2="518.1" stroke="#dfe5e8" stroke-width="1"/>
<rect x="71.9" y="351.4" width="65.39999999999999" height="9.0" fill="#889a69" stroke="#7a8b5d" stroke-width="0.8" />
<rect x="71.9" y="362.4" width="63.7" height="9.0" fill="#9b5a6f" stroke="#8b4f63" stroke-width="0.8" />
<text x="21.4" y="364.0" font-size="7.5" fill="#555" font-weight="normal" textLength="45.6" lengthAdjust="spacingAndGlyphs" >TELECOMUNICAZIONI</text>
<line x1="68.0" y1="361.4" x2="71.5" y2="361.4" stroke="#d3dadd" stroke-width="1"/>
<rect x="71.9" y="386.3" width="75.2" height="9.0" fill="#889a69" stroke="#7a8b5d" stroke-width="0.8" />
<rect x="71.9" y="397.3" width="73.50000000000001" height="9.0" fill="#9b5a6f" stroke="#8b4f63" stroke-width="0.8" />
<text x="13.0" y="398.9" font-size="7.5" fill="#555" font-weight="normal" textLength="54.0" lengthAdjust="spacingAndGlyphs" >FARMACEUTICI/SANITARI</text>
<line x1="68.0" y1="396.3" x2="71.5" y2="396.3" stroke="#d3dadd" stroke-width="1"/>
<rect x="71.9" y="421.5" width="105.2" height="9.0" fill="#889a69" stroke="#7a8b5d" stroke-width="0.8" />
<rect x="71.9" y="432.5" width="106.60000000000001" height="9.0" fill="#9b5a6f" stroke="#8b4f63" stroke-width="0.8" />
<text x="38.8" y="434.1" font-size="7.5" fill="#555" font-weight="normal" textLength="28.2" lengthAdjust="spacingAndGlyphs" >AUTOMOBILI</text>
<line x1="68.0" y1="431.5" x2="71.5" y2="431.5" stroke="#d3dadd" stroke-width="1"/>
<rect x="71.9" y="456.5" width="130.5" height="9.0" fill="#889a69" stroke="#7a8b5d" stroke-width="0.8" />
<rect x="71.9" y="467.5" width="98.10000000000001" height="9.0" fill="#9b5a6f" stroke="#8b4f63" stroke-width="0.8" />
<text x="32.0" y="469.1" font-size="7.5" fill="#555" font-weight="normal" textLength="35.0" lengthAdjust="spacingAndGlyphs" >DISTRIBUZIONE</text>
<line x1="68.0" y1="466.5" x2="71.5" y2="466.5" stroke="#d3dadd" stroke-width="1"/>
<rect x="71.9" y="491.5" width="169.7" height="9.0" fill="#889a69" stroke="#7a8b5d" stroke-width="0.8" />
<rect x="71.9" y="502.5" width="163.89999999999998" height="9.0" fill="#9b5a6f" stroke="#8b4f63" stroke-width="0.8" />
<text x="40.0" y="504.1" font-size="7.5" fill="#555" font-weight="normal" textLength="27.0" lengthAdjust="spacingAndGlyphs" >ALIMENTARI</text>
<line x1="68.0" y1="501.5" x2="71.5" y2="501.5" stroke="#d3dadd" stroke-width="1"/>
<line x1="71.5" y1="343.6" x2="71.5" y2="518.1" stroke="#d3dadd" stroke-width="1"/>
<line x1="71.5" y1="518.1" x2="259.6" y2="518.1" stroke="#d3dadd" stroke-width="1"/>
<line x1="71.5" y1="518.1" x2="71.5" y2="520.6" stroke="#d3dadd" stroke-width="1"/>
<line x1="77.378125" y1="518.1" x2="77.378125" y2="519.6" stroke="#d3dadd" stroke-width="1"/>
<line x1="83.25625" y1="518.1" x2="83.25625" y2="520.6" stroke="#d3dadd" stroke-width="1"/>
<line x1="89.134375" y1="518.1" x2="89.134375" y2="519.6" stroke="#d3dadd" stroke-width="1"/>
<line x1="95.0125" y1="518.1" x2="95.0125" y2="520.6" stroke="#d3dadd" stroke-width="1"/>
<line x1="100.890625" y1="518.1" x2="100.890625" y2="519.6" stroke="#d3dadd" stroke-width="1"/>
<line x1="106.76875000000001" y1="518.1" x2="106.76875000000001" y2="520.6" stroke="#d3dadd" stroke-width="1"/>
<line x1="112.64687500000001" y1="518.1" x2="112.64687500000001" y2="519.6" stroke="#d3dadd" stroke-width="1"/>
<line x1="118.525" y1="518.1" x2="118.525" y2="520.6" stroke="#d3dadd" stroke-width="1"/>
<line x1="124.403125" y1="518.1" x2="124.403125" y2="519.6" stroke="#d3dadd" stroke-width="1"/>
<line x1="130.28125" y1="518.1" x2="130.28125" y2="520.6" stroke="#d3dadd" stroke-width="1"/>
<line x1="136.159375" y1="518.1" x2="136.159375" y2="519.6" stroke="#d3dadd" stroke-width="1"/>
<line x1="142.03750000000002" y1="518.1" x2="142.03750000000002" y2="520.6" stroke="#d3dadd" stroke-width="1"/>
<line x1="147.915625" y1="518.1" x2="147.915625" y2="519.6" stroke="#d3dadd" stroke-width="1"/>
<line x1="153.79375000000002" y1="518.1" x2="153.79375000000002" y2="520.6" stroke="#d3dadd" stroke-width="1"/>
<line x1="159.671875" y1="518.1" x2="159.671875" y2="519.6" stroke="#d3dadd" stroke-width="1"/>
<line x1="165.55" y1="518.1" x2="165.55" y2="520.6" stroke="#d3dadd" stroke-width="1"/>
<line x1="171.42812500000002" y1="518.1" x2="171.42812500000002" y2="519.6" stroke="#d3dadd" stroke-width="1"/>
<line x1="177.30625" y1="518.1" x2="177.30625" y2="520.6" stroke="#d3dadd" stroke-width="1"/>
<line x1="183.18437500000002" y1="518.1" x2="183.18437500000002" y2="519.6" stroke="#d3dadd" stroke-width="1"/>
<line x1="189.0625" y1="518.1" x2="189.0625" y2="520.6" stroke="#d3dadd" stroke-width="1"/>
<line x1="194.940625" y1="518.1" x2="194.940625" y2="519.6" stroke="#d3dadd" stroke-width="1"/>
<line x1="200.81875000000002" y1="518.1" x2="200.81875000000002" y2="520.6" stroke="#d3dadd" stroke-width="1"/>
<line x1="206.696875" y1="518.1" x2="206.696875" y2="519.6" stroke="#d3dadd" stroke-width="1"/>
<line x1="212.57500000000002" y1="518.1" x2="212.57500000000002" y2="520.6" stroke="#d3dadd" stroke-width="1"/>
<line x1="218.45312500000003" y1="518.1" x2="218.45312500000003" y2="519.6" stroke="#d3dadd" stroke-width="1"/>
<line x1="224.33125" y1="518.1" x2="224.33125" y2="520.6" stroke="#d3dadd" stroke-width="1"/>
<line x1="230.20937500000002" y1="518.1" x2="230.20937500000002" y2="519.6" stroke="#d3dadd" stroke-width="1"/>
<line x1="236.08750000000003" y1="518.1" x2="236.08750000000003" y2="520.6" stroke="#d3dadd" stroke-width="1"/>
<line x1="241.96562500000002" y1="518.1" x2="241.96562500000002" y2="519.6" stroke="#d3dadd" stroke-width="1"/>
<line x1="247.84375000000003" y1="518.1" x2="247.84375000000003" y2="520.6" stroke="#d3dadd" stroke-width="1"/>
<line x1="253.721875" y1="518.1" x2="253.721875" y2="519.6" stroke="#d3dadd" stroke-width="1"/>
<line x1="259.6" y1="518.1" x2="259.6" y2="520.6" stroke="#d3dadd" stroke-width="1"/>
<text x="67.7" y="531.0" font-size="7.6" fill="#555" font-weight="normal" textLength="6.7" lengthAdjust="spacingAndGlyphs" >0M</text>
<text x="89.3" y="531.0" font-size="7.6" fill="#555" font-weight="normal" textLength="12.0" lengthAdjust="spacingAndGlyphs" >100M</text>
<text x="113.0" y="531.0" font-size="7.6" fill="#555" font-weight="normal" textLength="12.0" lengthAdjust="spacingAndGlyphs" >200M</text>
<text x="136.5" y="531.0" font-size="7.6" fill="#555" font-weight="normal" textLength="12.0" lengthAdjust="spacingAndGlyphs" >300M</text>
<text x="160.8" y="531.0" font-size="7.6" fill="#555" font-weight="normal" textLength="12.0" lengthAdjust="spacingAndGlyphs" >400M</text>
<text x="184.4" y="531.0" font-size="7.6" fill="#555" font-weight="normal" textLength="12.0" lengthAdjust="spacingAndGlyphs" >500M</text>
<text x="208.2" y="531.0" font-size="7.6" fill="#555" font-weight="normal" textLength="12.0" lengthAdjust="spacingAndGlyphs" >600M</text>
<text x="232.2" y="531.0" font-size="7.6" fill="#555" font-weight="normal" textLength="12.0" lengthAdjust="spacingAndGlyphs" >700M</text>
<text x="0" y="0" font-size="11" fill="#444" textLength="17" lengthAdjust="spacingAndGlyphs" transform="translate(165.5,545)" text-anchor="middle">Netto</text>
<rect x="364.5" y="343.6" width="84.10000000000002" height="174.69999999999993" fill="#ffffff" />
<line x1="376.5" y1="343.6" x2="376.5" y2="518.3" stroke="#dfe5e8" stroke-width="1"/>
<line x1="388.6" y1="343.6" x2="388.6" y2="518.3" stroke="#dfe5e8" stroke-width="1"/>
<line x1="400.6" y1="343.6" x2="400.6" y2="518.3" stroke="#dfe5e8" stroke-width="1"/>
<line x1="412.6" y1="343.6" x2="412.6" y2="518.3" stroke="#dfe5e8" stroke-width="1"/>
<line x1="424.6" y1="343.6" x2="424.6" y2="518.3" stroke="#dfe5e8" stroke-width="1"/>
<line x1="436.6" y1="343.6" x2="436.6" y2="518.3" stroke="#dfe5e8" stroke-width="1"/>
<line x1="364.5" y1="343.6" x2="448.6" y2="343.6" stroke="#e3e8ea" stroke-width="1"/>
<line x1="448.6" y1="343.6" x2="448.6" y2="518.3" stroke="#dfe5e8" stroke-width="1"/>
<rect x="364.9" y="351.4" width="44.500000000000014" height="9.0" fill="#889a69" stroke="#7a8b5d" stroke-width="0.8" />
<rect x="364.9" y="362.4" width="46.09999999999998" height="9.0" fill="#9b5a6f" stroke="#8b4f63" stroke-width="0.8" />
<text x="288.2" y="364.0" font-size="7.5" fill="#555" font-weight="normal" textLength="71.8" lengthAdjust="spacingAndGlyphs" >BARILLA ALIMENTARE SPA PARMA</text>
<line x1="361.0" y1="361.4" x2="364.5" y2="361.4" stroke="#d3dadd" stroke-width="1"/>
<rect x="364.9" y="386.3" width="46.800000000000026" height="9.0" fill="#889a69" stroke="#7a8b5d" stroke-width="0.8" />
<rect x="364.9" y="397.3" width="44.500000000000014" height="9.0" fill="#9b5a6f" stroke="#8b4f63" stroke-width="0.8" />
<text x="319.4" y="398.9" font-size="7.5" fill="#555" font-weight="normal" textLength="40.6" lengthAdjust="spacingAndGlyphs" >INTERMEDIARI (B)</text>
<line x1="361.0" y1="396.3" x2="364.5" y2="396.3" stroke="#d3dadd" stroke-width="1"/>
<rect x="364.9" y="421.5" width="56.09999999999998" height="9.0" fill="#889a69" stroke="#7a8b5d" stroke-width="0.8" />
<rect x="364.9" y="432.5" width="47.59999999999998" height="9.0" fill="#9b5a6f" stroke="#8b4f63" stroke-width="0.8" />
<text x="293.2" y="434.1" font-size="7.5" fill="#555" font-weight="normal" textLength="66.8" lengthAdjust="spacingAndGlyphs" >PROCTER &amp; GAMBLE SPA ROMA</text>
<line x1="361.0" y1="431.5" x2="364.5" y2="431.5" stroke="#d3dadd" stroke-width="1"/>
<rect x="364.9" y="456.5" width="56.09999999999998" height="9.0" fill="#889a69" stroke="#7a8b5d" stroke-width="0.8" />
<rect x="364.9" y="467.5" width="55.300000000000026" height="9.0" fill="#9b5a6f" stroke="#8b4f63" stroke-width="0.8" />
<text x="279.7" y="469.1" font-size="7.5" fill="#555" font-weight="normal" textLength="80.3" lengthAdjust="spacingAndGlyphs" >VOLKSWAGEN GROUP IT.SPA VERONA</text>
<line x1="361.0" y1="466.5" x2="364.5" y2="466.5" stroke="#d3dadd" stroke-width="1"/>
<rect x="364.9" y="491.5" width="76.2" height="9.0" fill="#889a69" stroke="#7a8b5d" stroke-width="0.8" />
<rect x="364.9" y="502.5" width="53.89999999999999" height="9.0" fill="#9b5a6f" stroke="#8b4f63" stroke-width="0.8" />
<text x="289.3" y="504.1" font-size="7.5" fill="#555" font-weight="normal" textLength="70.7" lengthAdjust="spacingAndGlyphs" >FERRERO P &amp; C SPA ALBA CUNEO</text>
<line x1="361.0" y1="501.5" x2="364.5" y2="501.5" stroke="#d3dadd" stroke-width="1"/>
<line x1="364.5" y1="343.6" x2="364.5" y2="518.3" stroke="#d3dadd" stroke-width="1"/>
<line x1="364.5" y1="518.3" x2="448.6" y2="518.3" stroke="#d3dadd" stroke-width="1"/>
<line x1="364.5" y1="518.3" x2="364.5" y2="520.8" stroke="#d3dadd" stroke-width="1"/>
<line x1="370.1066666666667" y1="518.3" x2="370.1066666666667" y2="519.8" stroke="#d3dadd" stroke-width="1"/>
<line x1="375.7133333333333" y1="518.3" x2="375.7133333333333" y2="520.8" stroke="#d3dadd" stroke-width="1"/>
<line x1="381.32" y1="518.3" x2="381.32" y2="519.8" stroke="#d3dadd" stroke-width="1"/>
<line x1="386.9266666666667" y1="518.3" x2="386.9266666666667" y2="520.8" stroke="#d3dadd" stroke-width="1"/>
<line x1="392.53333333333336" y1="518.3" x2="392.53333333333336" y2="519.8" stroke="#d3dadd" stroke-width="1"/>
<line x1="398.14" y1="518.3" x2="398.14" y2="520.8" stroke="#d3dadd" stroke-width="1"/>
<line x1="403.74666666666667" y1="518.3" x2="403.74666666666667" y2="519.8" stroke="#d3dadd" stroke-width="1"/>
<line x1="409.35333333333335" y1="518.3" x2="409.35333333333335" y2="520.8" stroke="#d3dadd" stroke-width="1"/>
<line x1="414.96000000000004" y1="518.3" x2="414.96000000000004" y2="519.8" stroke="#d3dadd" stroke-width="1"/>
<line x1="420.56666666666666" y1="518.3" x2="420.56666666666666" y2="520.8" stroke="#d3dadd" stroke-width="1"/>
<line x1="426.17333333333335" y1="518.3" x2="426.17333333333335" y2="519.8" stroke="#d3dadd" stroke-width="1"/>
<line x1="431.78000000000003" y1="518.3" x2="431.78000000000003" y2="520.8" stroke="#d3dadd" stroke-width="1"/>
<line x1="437.38666666666666" y1="518.3" x2="437.38666666666666" y2="519.8" stroke="#d3dadd" stroke-width="1"/>
<line x1="442.99333333333334" y1="518.3" x2="442.99333333333334" y2="520.8" stroke="#d3dadd" stroke-width="1"/>
<line x1="448.6" y1="518.3" x2="448.6" y2="519.8" stroke="#d3dadd" stroke-width="1"/>
<text x="361.1" y="531.0" font-size="7.6" fill="#555" font-weight="normal" textLength="6.7" lengthAdjust="spacingAndGlyphs" >0M</text>
<text x="372.0" y="531.0" font-size="7.6" fill="#555" font-weight="normal" textLength="9.3" lengthAdjust="spacingAndGlyphs" >20M</text>
<text x="395.5" y="531.0" font-size="7.6" fill="#555" font-weight="normal" textLength="9.3" lengthAdjust="spacingAndGlyphs" >60M</text>
<text x="418.8" y="531.0" font-size="7.6" fill="#555" font-weight="normal" textLength="12.0" lengthAdjust="spacingAndGlyphs" >100M</text>
<text x="439.3" y="531.0" font-size="7.6" fill="#555" font-weight="normal" textLength="12.0" lengthAdjust="spacingAndGlyphs" >140M</text>
<text x="0" y="0" font-size="11" fill="#444" textLength="17" lengthAdjust="spacingAndGlyphs" transform="translate(407.1,545)" text-anchor="middle">Netto</text>
</svg></body></html>
